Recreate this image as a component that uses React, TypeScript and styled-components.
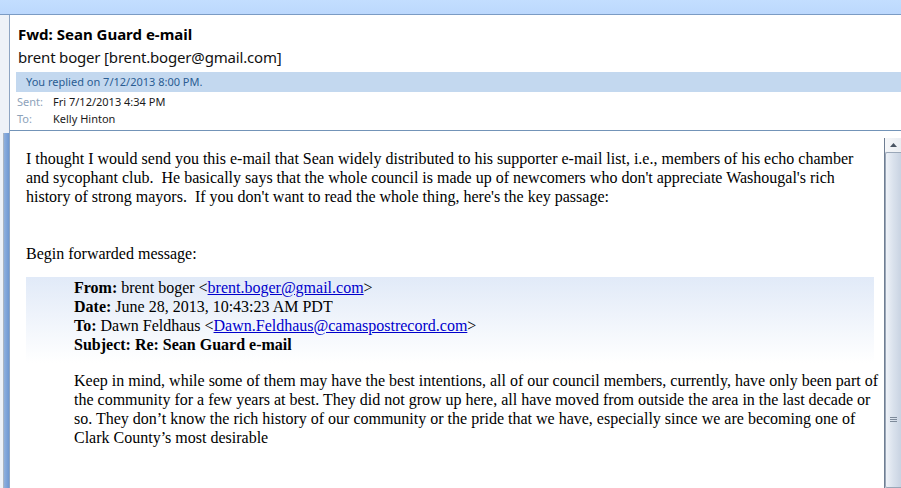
import styled, { createGlobalStyle } from "styled-components";

const GlobalStyle = createGlobalStyle`
  html, body {
    margin: 0;
    padding: 0;
    overflow: hidden;
    background: #ffffff;
  }
`;

const App = function App(): JSX.Element {
  return (
    <>
      <GlobalStyle />
      <Window>
        <TopStrip />
        <Main>
          <LeftPane>
            <PaneEdge />
          </LeftPane>
          <Reading>
            <Header>
              <Title>Fwd: Sean Guard e-mail</Title>
              <Sender>brent boger [brent.boger@gmail.com]</Sender>
              <InfoBar>You replied on 7/12/2013 8:00 PM.</InfoBar>
              <MetaRow>
                <MetaLabel>Sent:</MetaLabel>
                <MetaValue>Fri 7/12/2013 4:34 PM</MetaValue>
              </MetaRow>
              <MetaRow>
                <MetaLabel>To:</MetaLabel>
                <MetaValue>Kelly Hinton</MetaValue>
              </MetaRow>
            </Header>
            <BodyRow>
              <Body>
                <Line>
                  I thought I would send you this e-mail that Sean widely distributed to his supporter e-mail list, i.e., members of his echo chamber
                </Line>
                <Line>
                  and sycophant club.  He basically says that the whole council is made up of newcomers who don't appreciate Washougal's rich
                </Line>
                <Line>
                  history of strong mayors.  If you don't want to read the whole thing, here's the key passage:
                </Line>
                <Line> </Line>
                <Line> </Line>
                <Line>Begin forwarded message:</Line>
                <Forwarded>
                  <Line>
                    <b>From: </b>brent boger &lt;<MailLink href="#">brent.boger@gmail.com</MailLink>&gt;
                  </Line>
                  <Line>
                    <b>Date: </b>June 28, 2013, 10:43:23 AM PDT
                  </Line>
                  <Line>
                    <b>To: </b>Dawn Feldhaus &lt;<MailLink href="#">Dawn.Feldhaus@camaspostrecord.com</MailLink>&gt;
                  </Line>
                  <Line>
                    <b>Subject: Re: Sean Guard e-mail</b>
                  </Line>
                  <Quote>
                    <Line>
                      Keep in mind, while some of them may have the best intentions, all of our council members, currently, have only been part of
                    </Line>
                    <Line>
                      the community for a few years at best. They did not grow up here, all have moved from outside the area in the last decade or
                    </Line>
                    <Line>
                      so. They don’t know the rich history of our community or the pride that we have, especially since we are becoming one of
                    </Line>
                    <Line>Clark County’s most desirable</Line>
                  </Quote>
                </Forwarded>
              </Body>
              <Scrollbar>
                <ArrowButton>
                  <svg width="7" height="4" viewBox="0 0 7 4">
                    <path d="M0 4 L3.5 0 L7 4 Z" fill="#4a5563" />
                  </svg>
                </ArrowButton>
                <Thumb>
                  <Grip>
                    <svg width="7" height="6" viewBox="0 0 7 6">
                      <path d="M0 0.5 H7 M0 2.5 H7 M0 4.5 H7" stroke="#7e8a9a" strokeWidth="1" />
                    </svg>
                  </Grip>
                </Thumb>
              </Scrollbar>
            </BodyRow>
          </Reading>
        </Main>
      </Window>
    </>
  );
};

const Window = styled.div`
  width: 901px;
  height: 488px;
  display: flex;
  flex-direction: column;
  overflow: hidden;
`;

const TopStrip = styled.div`
  height: 14px;
  flex-shrink: 0;
  background: linear-gradient(#c3deff, #bcd8fd);
  border-bottom: 1px solid #7b9bc4;
`;

const Main = styled.div`
  flex: 1;
  display: flex;
  min-height: 0;
`;

const LeftPane = styled.div`
  width: 9px;
  flex-shrink: 0;
  display: flex;
  background: #eef2f8;
  border-right: 1px solid #8ea5c3;
`;

const PaneEdge = styled.div`
  margin-left: 3px;
  margin-top: 118px;
  flex: 1;
  border-left: 1px solid #a9b4c2;
  background: linear-gradient(90deg, #8fb0de, #6f98d2);
`;

const Reading = styled.div`
  flex: 1;
  display: flex;
  flex-direction: column;
  min-width: 0;
`;

const Header = styled.div`
  padding-left: 6px;
  padding-top: 8px;
  font-family: "Noto Sans", "Open Sans", sans-serif;
  border-bottom: 1px solid #7394b8;
  padding-bottom: 3px;
`;

const Title = styled.div`
  margin-left: 2px;
  font-size: 15px;
  font-weight: bold;
  line-height: 22px;
  color: #000000;
`;

const Sender = styled.div`
  margin-left: 2px;
  margin-top: 1px;
  font-size: 15px;
  line-height: 22px;
  letter-spacing: -0.18px;
  color: #111111;
  margin-bottom: 4px;
`;

const InfoBar = styled.div`
  height: 20px;
  line-height: 20px;
  padding-left: 10px;
  background: #c3d8ef;
  color: #2a5d93;
  font-size: 11px;
  margin-bottom: 1px;
`;

const MetaRow = styled.div`
  display: flex;
  height: 17px;
  align-items: center;
  font-size: 11px;
  padding-left: 1px;
`;

const MetaLabel = styled.span`
  width: 36px;
  color: #8da2ba;
`;

const MetaValue = styled.span`
  color: #1a1a1a;
`;

const BodyRow = styled.div`
  flex: 1;
  display: flex;
  min-height: 0;
  padding-top: 7px;
`;

const Body = styled.div`
  flex: 1;
  padding: 11px 10px 0 16px;
  font-family: "Liberation Serif", "Times New Roman", serif;
  font-size: 16px;
  line-height: 19px;
  color: #000000;
  overflow: hidden;
`;

const Line = styled.div`
  white-space: pre;
  height: 19px;
`;

const Forwarded = styled.div`
  margin-top: 14px;
  padding-left: 48px;
  padding-top: 1px;
  background: linear-gradient(#e1eaf8, #ffffff 86px);
`;

const Quote = styled.div`
  margin-top: 17px;
`;

const MailLink = styled.a`
  color: #0000cc;
  text-decoration: underline;
`;

const Scrollbar = styled.div`
  width: 16px;
  flex-shrink: 0;
  display: flex;
  flex-direction: column;
  border-left: 1px solid #6f7e93;
  background: #f0f2f5;
`;

const ArrowButton = styled.div`
  height: 13px;
  display: flex;
  align-items: center;
  justify-content: center;
  background: linear-gradient(90deg, #f6f7f9, #e9edf2);
`;

const Thumb = styled.div`
  flex: 1;
  margin-top: 1px;
  border: 1px solid #9aa7b8;
  border-right: none;
  border-radius: 2px 0 0 2px;
  background: linear-gradient(90deg, #eef2f8, #d9e1ec 50%, #c9d3e2);
  display: flex;
  justify-content: center;
  padding-top: 264px;
`;

const Grip = styled.div`
  height: 6px;
  display: flex;
`;

export default App;
